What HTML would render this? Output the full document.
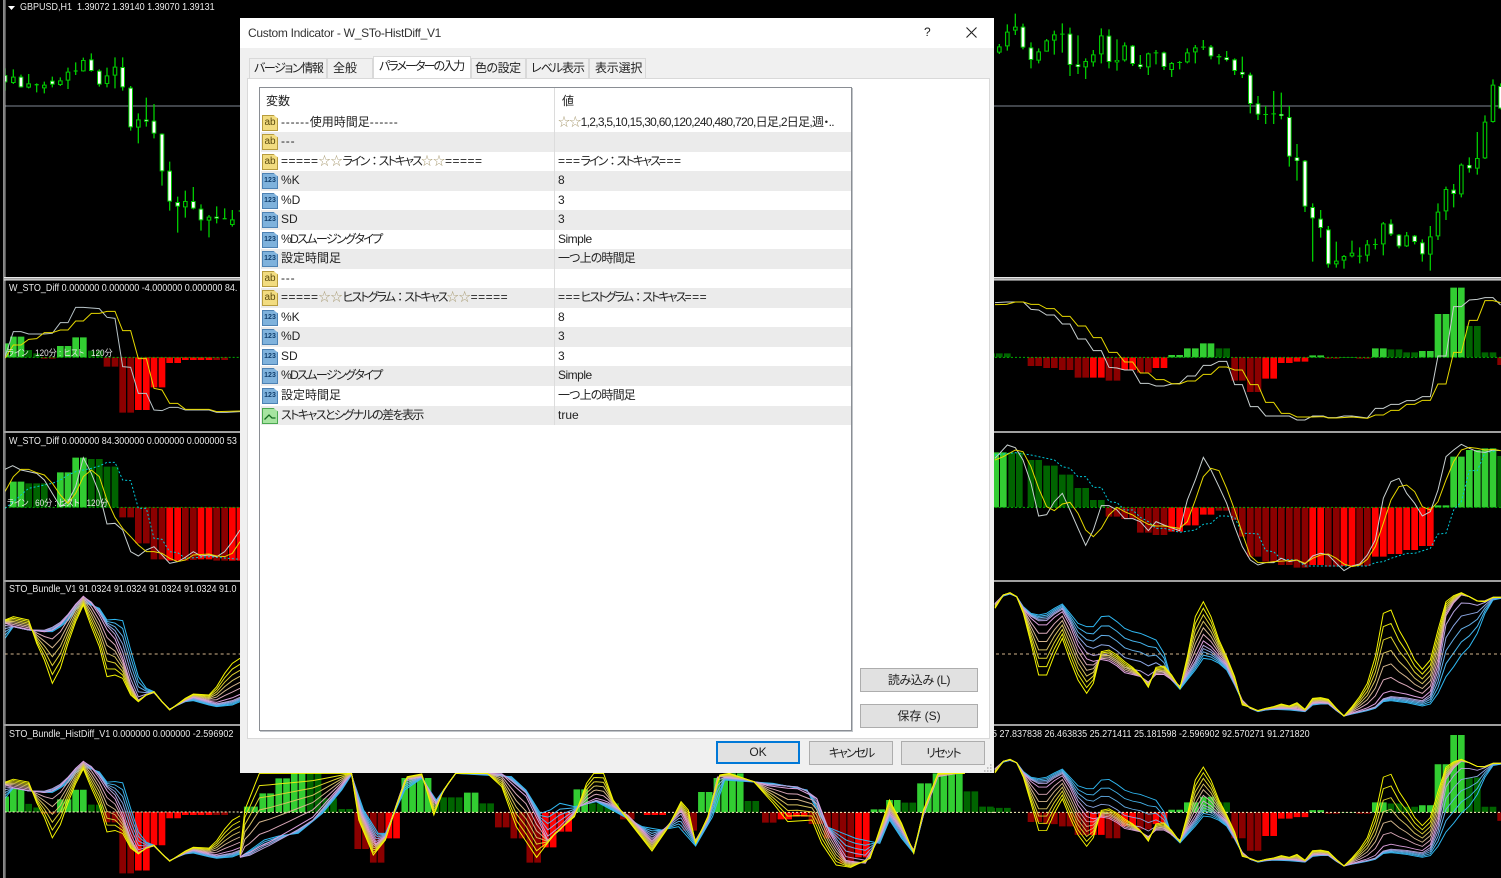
<!DOCTYPE html>
<html lang="ja"><head><meta charset="utf-8"><title>Custom Indicator</title>
<style>
html,body{margin:0;padding:0;background:#000}
body{position:relative;width:1501px;height:878px;overflow:hidden;font-family:"Liberation Sans","Noto Sans CJK JP",sans-serif}
svg.c{position:absolute;left:0;top:0}
.ns path{vector-effect:non-scaling-stroke}
path{fill:none}
.l{position:absolute;color:#e8e8e8;font-size:10px;line-height:12px;white-space:pre;transform:scaleX(.9);transform-origin:0 0;font-family:"Liberation Sans","Noto Sans CJK JP",sans-serif}
.d{position:absolute;left:240px;top:18px;width:754px;height:755px;background:#f0f0f0;font-size:12px;color:#222;font-feature-settings:"palt"}
.d div{position:absolute;white-space:pre}
.tb{left:0;top:0;width:754px;height:30px;background:#fff}
.tab{top:40px;height:20px;box-sizing:border-box;background:#f0f0f0;border:1px solid #d9d9d9;border-bottom:0;line-height:19px;text-align:left;font-size:12px}
.tab.a{top:38px;height:22px;background:#fff;z-index:2;line-height:19px}
.pg{left:7px;top:60px;width:741px;height:659px;background:#fff;border:1px solid #d9d9d9}
.lb{left:19px;top:69px;width:591px;height:642px;background:#fff;border:1px solid #8a8e94;box-shadow:1px 1px 0 #c0c4c8}
.r{left:1px;width:590px;line-height:19px}
.r.g{background:#ebebeb}
.n{left:20px;top:0}
.v{left:297px;top:0}
.i{left:1px;top:2px;width:14px;height:14px;font-size:10px;line-height:14px;text-align:center;font-family:"Liberation Sans",sans-serif;clip-path:polygon(0 0,72% 0,100% 22%,100% 100%,0 100%)}
.ab{background:#f2dc80;border:1px solid #b79c3e;color:#5c4c10}
.n1{background:#7fb2dc;border:1px solid #4d82b4;color:#123f6d;font-size:7px;font-weight:bold}
.bo{background:#a6e4a0;border:1px solid #4aa850}
.b{background:#e1e1e1;border:1px solid #adadad;text-align:center;line-height:22px;height:22px}
s{text-decoration:none;color:#a89a70}
i{font-style:normal;font-feature-settings:"palt" 0}
u{text-decoration:none;letter-spacing:.8px}
b{font-weight:normal;letter-spacing:-1.9px}
em{font-style:normal;letter-spacing:.5px}
</style></head><body>
<svg class="c" width="1501" height="878" viewBox="0 0 1501 878">
<rect width="1501" height="878" fill="#000"/>
<defs>
<g id="barsR" stroke-width="20">
<path stroke="#32cd32" d="M545 232V225M569 232V225M592 232V205M616 232V205M640 232V190M663 232V190M968 232V226M992 232V226M1062 232V231M1086 232V231M1156 232V205M1180 232V205M1297 232V213M1321 232V213M1344 232V102M1368 232V102M1391 232V23M1414 232V23"/>
<path stroke="#006400" d="M5 232V220M28 232V220M52 232V220M687 232V205M710 232V205M1203 232V208M1227 232V208M1250 232V217M1274 232V217M1438 232V138M1462 232V138M1485 232V217M1509 232V217"/>
<path stroke="#f00" d="M310 232V293M334 232V293M404 232V270M428 232V270M498 232V264M522 232V264M827 232V296M851 232V296M874 232V249M898 232V249M921 232V245M945 232V245"/>
<path stroke="#8b0000" d="M123 232V258M146 232V258M170 232V264M193 232V264M217 232V270M240 232V270M264 232V293M287 232V293M357 232V302M381 232V302M451 232V278M475 232V278M734 232V302M757 232V302M781 232V336M804 232V336M1015 232V236M1039 232V236M1109 232V236M1132 232V236M1532 232V255"/>
</g>
<g id="barsL" stroke-width="20">
<path stroke="#32cd32" d="M17 1072V1030M40 1072V1010M63 1072V1010M181 1072V1038M204 1072V1038M227 1072V1012M250 1072V1012"/>
<path stroke="#006400" d="M86 1072V1050M110 1072V1060M274 1072V1052M298 1072V1052"/>
<path stroke="#8b0000" d="M133 1072V1076M157 1072V1076M321 1072V1100M345 1072V1100M368 1072V1238M392 1072V1238M650 1072V1080M674 1072V1080"/>
<path stroke="#f00" d="M415 1072V1230M439 1072V1230M462 1072V1162M486 1072V1162M509 1072V1089M533 1072V1089M556 1072V1080M580 1072V1080M603 1072V1080M627 1072V1080"/>
</g>
<g id="bR" stroke-width="3"></g>
<g id="bL" stroke-width="3"></g>
</defs>

<g transform="scale(.33333)">
<path stroke="#7f8794" stroke-width="3" d="M14 318H3000"/>
<path stroke="#7f8794" stroke-width="3" d="M2970 318H4503"/>
<!-- left candles -->
<path stroke="#00c800" stroke-width="4" d="M15 205V272M40 208V252M63 224V263M86 222V265M110 250V277M133 245V280M157 230V262M181 232V258M204 203V267M227 187V225M250 173V215M274 160V215M298 208V260M321 203V262M345 172V265M368 172V272M392 258V392M415 340V430M439 293V380M462 312V415M486 400V557M509 485V632M533 590V698M556 572V653M580 561V628M603 613V692M627 645V712M650 619V670M674 625V657M697 630V680M716 633H724M104 254H116M221 213H233M433 361H445M668 656H680"/>
<path stroke="#00c800" stroke-width="14" d="M15 225V247M40 230V249M63 230V262M86 250V263M133 254V265M157 242V254M181 241V255M204 215V242M250 180V214M274 178V213M298 212V254M321 226V252M345 200V227M368 201V262M392 263V382M415 358V383M439 359V365M462 362V401M486 401V514M509 512V605M533 606V620M556 603V622M580 603V626M603 626V661M627 650V662M650 650V656M697 658V675"/>
<path stroke="#fff" stroke-width="8" d="M15 228V244M63 233V259M157 245V251M274 181V210M298 215V251M368 204V259M392 266V379M439 361V363M462 365V398M486 404V511M509 515V602M533 609V617M580 606V623M603 629V658M650 652V654"/>
<path stroke="#000" stroke-width="7" d="M40 233V246M86 253V260M133 257V262M181 244V252M204 218V239M250 183V211M321 229V249M345 203V224M415 361V380M556 606V619M627 653V659M697 661V672"/>
<!-- left panel 2 -->
<use href="#barsL"/>
<path stroke="#00b000" stroke-width="3" stroke-dasharray="6 6" d="M14 1072H730"/>
<path stroke="#b8c4c8" stroke-width="3" d="M15 1070L40 995 63 995 86 1002 133 1002 157 1000 181 968 204 968 227 922 250 922 298 926 321 952 345 955 368 1100 392 1102 415 1180 439 1180 462 1230 486 1232 509 1222 533 1222 556 1230 627 1230 650 1237 680 1237 720 1235"/>
<path stroke="#e6d800" stroke-width="3" d="M15 1075L40 1035 63 1035 86 1018 110 1016 133 998 157 998 181 990 204 990 227 963 250 963 274 940 298 940 321 934 345 934 368 992 392 992 415 1076 439 1076 462 1165 486 1170 509 1210 533 1210 556 1228 627 1228 650 1235 720 1233"/>
<!-- left panels 3,4,5 -->
<g transform="translate(0,1290)">
<g stroke-width="20">
<path stroke="#32cd32" d="M40 232V155M63 232V155M181 232V127M204 232V127M227 232V83M250 232V83"/>
<path stroke="#006400" d="M86 232V160M110 232V160M133 232V160M274 232V87M298 232V87M321 232V110M345 232V110"/>
<path stroke="#8b0000" d="M368 232V262M392 232V262M415 232V340M439 232V340M462 232V388M486 232V388M556 232V392M580 232V390M650 232V392M674 232V392"/>
<path stroke="#f00" d="M509 232V392M533 232V392M603 232V388M627 232V388M697 232V392M720 232V392"/>
</g>
<path stroke="#00b000" stroke-width="3" stroke-dasharray="6 6" d="M14 232H730"/>
<path stroke="#00c8d8" stroke-width="3" stroke-dasharray="6 6" d="M15 235L40 215 63 195 86 175 133 165 157 160 181 150 204 135 227 125 274 115 298 108 321 97 345 97 368 150 392 152 415 235 439 235 462 325 486 328 509 365 533 368 556 385 627 380 720 388"/>
<path stroke="#c8d0d0" stroke-width="3" d="M15 118L38 107 63 120 86 125 110 130 133 150 157 190 181 230 204 215 227 170 250 83 274 130 298 190 321 282 345 280 368 300 392 365 415 378 439 360 462 350 486 375 509 400 533 395 556 382 580 365 603 378 627 375 650 380 674 365 697 335 720 300"/>
<path stroke="#e6d800" stroke-width="3" d="M15 185L40 140 63 118 86 118 110 128 133 135 157 160 181 195 204 220 227 190 250 140 274 120 298 140 321 210 345 262 368 295 392 320 415 345 439 365 462 365 486 370 509 385 533 395 556 390 580 375 627 372 650 378 674 380 697 370 720 335"/>
<use href="#bL"/>
<path stroke="#d2b48c" stroke-width="3" stroke-dasharray="9 9" d="M14 672H730"/>
</g>
<use href="#barsL" transform="translate(0,1246.1) scale(1,1.11)"/>
<g transform="translate(0,1290)"><path stroke="#fff8c0" stroke-width="3" stroke-dasharray="6 6" d="M14 1146H730"/><use href="#bL" transform="translate(0,555.5) scale(1,.879)"/></g>

<!-- right candles -->
<g transform="translate(2970,0)">
<path stroke="#00c800" stroke-width="4" d="M28 132V162M52 73V152M76 41V105M99 71V148M123 127V205M146 145V190M170 117V155M193 92V164M217 70V158M240 83V228M264 106V222M287 175V237M310 150V200M334 85V190M357 88V205M381 118V212M404 127V185M428 135V198M451 165V207M475 158V225M498 150V193M522 155V210M545 186V231M569 183V208M592 145V190M616 135V190M640 120V150M663 135V178M687 162V193M710 153V184M734 175V225M757 170V234M781 218V340M804 288V360M827 318V372M851 273V372M874 278V358M898 318V500M921 432V542M945 480V636M968 610V785M992 630V713M1015 678V803M1039 725V803M1062 765V806M1086 722V772M1109 742V790M1132 720V785M1156 716V748M1180 666V766M1203 658V708M1227 702V745M1250 696V741M1274 705V733M1297 718V785M1321 678V812M1344 610V720M1368 560V660M1391 552V622M1414 490V592M1438 472V518M1462 396V524M1485 346V477M1509 238V368M1532 250V328"/>
<path stroke="#00c800" stroke-width="14" d="M28 139V158M52 95V139M76 80V92M99 80V143M123 142V180M146 154V182M170 121V155M193 103V122M217 101V104M240 101V195M264 193V201M287 183V202M310 163V187M334 106V163M357 107V186M381 180V187M404 136V181M428 137V192M451 193V201M475 160V202M498 157V160M522 157V201M545 189V210M569 186V189M592 157V187M616 142V157M640 140V143M663 140V169M687 168V172M710 172V180M734 178V213M757 216V224M781 224V312M804 310V344M827 342V345M851 340V343M874 342V348M898 351V470M921 472V483M945 482V620M968 621V655M992 656V684M1015 688V793M1039 782V793M1062 768V782M1086 758V769M1109 767V770M1132 733V767M1156 732V735M1180 670V733M1203 671V703M1227 704V739M1250 706V739M1274 707V726M1297 727V763M1321 709V764M1344 635V709M1368 567V634M1391 569V582M1414 494V583M1438 495V505M1462 474V506M1485 365V475M1509 254V366M1532 258V326"/>
<path stroke="#fff" stroke-width="8" d="M99 83V140M123 145V177M240 104V192M264 195V199M357 110V183M428 140V189M451 195V199M522 160V198M663 143V166M710 174V178M734 181V210M757 218V222M781 227V309M804 313V341M874 344V346M898 354V467M921 474V481M945 485V617M968 624V652M992 659V681M1015 691V790M1203 674V700M1227 707V736M1274 710V723M1297 730V760M1391 572V579M1438 497V503M1532 261V323"/>
<path stroke="#000" stroke-width="7" d="M28 142V155M52 98V136M76 83V89M146 157V179M170 124V152M193 106V119M287 186V199M310 166V184M334 109V160M381 182V185M404 139V178M475 163V199M545 192V207M592 160V184M616 145V154M1039 785V790M1062 771V779M1086 761V766M1132 736V764M1180 673V730M1250 709V736M1321 712V761M1344 638V706M1368 570V631M1414 497V580M1462 477V503M1485 368V472M1509 257V363"/>
</g>

<!-- right panels 2,3 -->
<g transform="translate(2970,840)">
<use href="#barsR"/>
<path stroke="#00b000" stroke-width="3" stroke-dasharray="6 6" d="M15 232H1533"/>
<path stroke="#c8d0d0" stroke-width="3" d="M15 68L50 66 100 66 123 88 146 90 170 105 193 105 217 132 240 132 264 177 287 177 310 212 334 212 357 262 381 264 404 270 428 270 451 310 475 310 498 318 522 318 545 312 569 310 592 288 616 288 640 256 663 256 687 244 710 244 734 314 757 314 781 380 804 380 827 408 851 408 898 408 921 420 945 420 968 408 1000 408 1015 413 1039 413 1062 408 1086 408 1132 414 1156 385 1180 385 1203 373 1227 373 1250 362 1274 362 1297 350 1321 350 1344 228 1368 228 1391 80 1414 80 1438 60 1462 58 1485 53 1509 53 1532 75"/>
<path stroke="#e6d800" stroke-width="3" d="M15 74L50 73 76 66 100 66 123 73 146 73 170 86 193 86 217 109 240 109 264 138 287 138 310 173 334 173 357 217 381 217 404 246 428 246 451 279 475 279 498 299 522 299 545 311 569 312 592 303 616 303 640 283 663 283 687 261 710 261 734 270 757 270 781 314 804 314 827 367 851 367 874 400 898 400 921 411 968 411 1000 410 1015 414 1039 414 1086 411 1132 415 1156 405 1180 405 1203 391 1227 391 1250 373 1274 373 1297 361 1321 361 1344 312 1368 312 1391 217 1414 217 1438 121 1462 121 1485 62 1509 62 1532 68"/>
<g stroke-width="20">
<path stroke="#32cd32" d="M17 682V517M40 682V517M1391 682V530M1414 682V530M1438 682V510M1462 682V510M1485 682V505M1509 682V505M1344 682V676M1368 682V676"/>
<path stroke="#006400" d="M65 682V517M88 682V517M123 682V540M146 682V540M170 682V557M193 682V557M217 682V584M240 682V584M264 682V624M287 682V624M310 682V660M334 682V660M1532 682V528"/>
<path stroke="#8b0000" d="M357 682V710M381 682V710M404 682V717M428 682V717M451 682V758M475 682V758M498 682V765M522 682V765M687 682V692M710 682V692M734 682V720M757 682V770M781 682V830M804 682V830M827 682V845M851 682V845M874 682V855M898 682V855M921 682V863M945 682V863M1015 682V860M1039 682V860M1109 682V858M1132 682V858"/>
<path stroke="#f00" d="M545 682V755M569 682V755M592 682V736M616 682V736M640 682V704M663 682V704M968 682V855M992 682V855M1062 682V858M1086 682V858M1156 682V830M1180 682V830M1203 682V822M1227 682V822M1250 682V810M1274 682V810M1297 682V798M1321 682V798"/>
</g>
<path stroke="#00b000" stroke-width="3" stroke-dasharray="6 6" d="M15 682H1533"/>
<path stroke="#00c8d8" stroke-width="3" stroke-dasharray="6 6" d="M15 525L76 518 123 525 170 535 193 540 217 560 240 565 264 590 287 590 310 622 334 622 357 665 381 668 404 690 428 690 451 712 475 725 498 745 522 745 569 757 616 750 640 733 663 730 687 708 710 708 734 712 757 760 781 760 804 762 827 812 851 815 874 838 921 840 945 858 1132 858 1156 848 1180 845 1203 835 1250 820 1274 820 1321 805 1344 762 1368 760 1391 690 1414 665 1438 572 1462 572 1485 518 1532 510"/>
<path stroke="#c8d0d0" stroke-width="3" d="M15 535L52 495 76 503 99 540 123 610 146 708 170 704 193 665 217 640 240 690 264 745 287 796 310 750 334 677 357 677 381 690 404 716 428 716 451 725 475 752 498 725 522 735 569 752 592 660 616 600 640 532 663 570 687 620 710 670 734 740 757 800 781 840 804 855 827 848 851 848 874 835 898 845 921 840 945 852 968 828 992 820 1015 825 1039 850 1062 872 1086 858 1109 852 1132 825 1156 780 1180 655 1203 605 1227 595 1250 640 1274 670 1297 708 1321 695 1344 630 1368 530 1391 510 1414 493 1438 505 1462 515 1485 517 1509 510 1532 512"/>
<path stroke="#e6d800" stroke-width="3" d="M15 540L40 530 76 510 99 515 123 560 146 625 170 680 193 692 217 672 240 667 264 700 287 750 310 770 334 745 357 705 381 682 404 695 428 705 451 720 475 733 498 738 522 738 569 745 592 725 616 660 640 590 663 565 687 572 710 625 734 690 757 760 781 828 804 848 827 848 851 845 898 842 921 840 945 850 968 835 992 825 1015 822 1039 835 1062 852 1086 860 1109 855 1132 838 1156 800 1180 730 1203 660 1227 620 1250 615 1274 635 1297 680 1321 690 1344 665 1368 600 1391 545 1414 510 1438 502 1462 505 1485 510 1509 508 1532 512"/>
</g>

<!-- right panels 4,5 -->
<g transform="translate(2970,1740)">
<use href="#bR"/>
<path stroke="#d2b48c" stroke-width="3" stroke-dasharray="9 9" d="M0 222H1533"/>
<use href="#barsR" transform="translate(0,439.5) scale(1,1.11)"/>
<path stroke="#fff8c0" stroke-width="3" stroke-dasharray="6 6" d="M0 697H1533"/>
<use href="#bR" transform="translate(0,505) scale(1,.865)"/>
</g>
</g>

<!-- middle bottom -->
<g class="ns" transform="translate(240,770) scale(.4847,.33333)">
<g stroke-width="6.7">
<path stroke="#32cd32" d="M15 127V110M30 127V110M47 127V70M63 127V70M80 127V25M96 127V25M112 127V10M128 127V10M340 127V24M356 127V24M372 127V24M388 127V24M469 127V68M485 127V68M695 127V58M711 127V58M952 127V66M968 127V66M984 127V24M1000 127V24M1016 127V10M1032 127V10M1308 127V118M1324 127V118M1340 127V90M1356 127V90M1404 127V40M1420 127V40M1436 127V10M1452 127V10M1468 127V10M1484 127V10"/>
<path stroke="#006400" d="M145 127V10M161 127V10M177 127V85M193 127V85M210 127V117M226 127V117M404 127V100M420 127V82M436 127V82M452 127V82M501 127V100M517 127V100M727 127V100M743 127V100M759 127V100M775 127V100M1048 127V93M1064 127V93M1372 127V98M1388 127V98M1500 127V64M1516 127V64M1532 127V110M1548 127V110"/>
<path stroke="#f00" d="M307 127V205M323 127V205M630 127V232M646 127V232M662 127V185M678 127V185M840 127V135M856 127V135M872 127V135M1116 127V148M1132 127V148M1148 127V140M1164 127V140M1276 127V262M1292 127V262"/>
<path stroke="#8b0000" d="M243 127V237M259 127V237M275 127V278M291 127V278M533 127V172M549 127V172M565 127V205M582 127V205M598 127V278M614 127V278M791 127V148M807 127V148M920 127V182M936 127V182M1084 127V158M1100 127V158M1180 127V162M1196 127V162M1212 127V205M1228 127V205M1244 127V280M1260 127V280"/>
</g>
<path stroke="#fff8c0" stroke-width="1" stroke-dasharray="2 2" d="M0 127H1560"/>
<g id="bM" stroke-width="1"></g>
</g>

<rect x="0" y="0" width="4.6" height="878" fill="#000"/>
<rect x="3" y="0" width="1" height="878" fill="#8c8c8c"/>
<rect x="4.4" y="0" width="1" height="878" fill="#d0d0d0"/>
<g fill="#a0a0a0">
<rect x="4" y="277" width="1497" height="3"/><rect x="4" y="431" width="1497" height="2"/><rect x="4" y="580" width="1497" height="2"/><rect x="4" y="724" width="1497" height="2"/>
</g>
<g fill="#e8e8e8"><rect x="4" y="277" width="1497" height="1"/><rect x="4" y="279.5" width="1497" height="1"/></g>
<path fill="#fff" style="fill:#fff" d="M8 6H15L11.500 10Z"/>
</svg>
<script>
(function(){
var NS="http://www.w3.org/2000/svg";
var cols=["#2fb8f2","#45b4ec","#62aee6","#8ba6e2","#b4a2dc","#dda0dd","#d9a8b8","#d2b48c","#d4c060","#dcd030","#e8e810","#f6f600"];
function parse(s){var n=s.trim().split(/[ ,]+/).map(Number),p=[];for(var i=0;i<n.length;i+=2)p.push([n[i],n[i+1]]);return p}
function at(p,x){if(x<=p[0][0])return p[0][1];for(var i=1;i<p.length;i++){if(x<=p[i][0]){var a=p[i-1],b=p[i];return a[1]+(b[1]-a[1])*(x-a[0])/(b[0]-a[0])}}return p[p.length-1][1]}
function build(id,fs,ms,ss){
var F=parse(fs),M=parse(ms),S=parse(ss),seen={},xs=[];
[F,M,S].forEach(function(c){c.forEach(function(q){if(!seen[q[0]]){seen[q[0]]=1;xs.push(q[0])}})});
xs.sort(function(a,b){return a-b});
var g=document.getElementById(id),N=cols.length;
for(var k=0;k<N;k++){
var t=k/(N-1),d="";
for(var j=0;j<xs.length;j++){
var x=xs[j],y;
if(t<.42){var u=t/.42;y=at(S,x)*(1-u)+at(M,x)*u}else{var v=(t-.42)/.58;y=at(M,x)*(1-v)+at(F,x)*v}
d+=(j?"L":"M")+x+" "+y.toFixed(1);
}
var e=document.createElementNS(NS,"path");e.setAttribute("d",d);e.setAttribute("stroke",cols[k]);
g.appendChild(e);
}
}
build("bR",
"15 85 40 45 60 38 80 50 100 100 123 190 146 285 170 285 193 225 217 175 240 240 264 300 290 340 310 310 334 215 357 210 381 225 404 245 428 262 451 285 475 322 498 262 522 258 545 285 570 325 592 230 616 110 640 65 663 110 687 180 710 230 734 290 757 375 781 382 804 392 827 385 851 380 874 372 898 378 921 368 945 388 968 355 992 353 1015 358 1039 385 1062 408 1086 380 1109 350 1132 310 1156 230 1180 100 1203 90 1227 150 1250 190 1274 240 1297 268 1321 240 1344 150 1368 65 1391 47 1414 38 1438 50 1462 63 1485 65 1509 52 1533 52",
"15 70 40 45 60 40 80 50 100 85 123 110 146 125 170 125 193 105 217 90 240 130 264 190 290 230 310 240 334 240 357 245 381 260 404 280 428 285 451 290 475 305 498 285 522 285 545 300 570 318 592 280 616 240 640 190 663 205 687 230 710 255 734 310 757 360 781 385 804 392 827 388 851 385 898 385 945 392 968 370 992 368 1015 370 1039 390 1062 408 1086 400 1132 388 1156 380 1180 355 1203 348 1250 352 1297 360 1321 340 1344 260 1368 110 1391 70 1414 45 1438 50 1462 63 1485 62 1509 52 1533 52",
"15 75 40 48 60 42 80 50 100 80 123 100 146 105 170 100 193 85 217 72 240 100 264 130 290 140 310 140 334 110 357 108 381 125 404 145 428 155 451 160 475 170 498 180 522 220 545 300 570 328 592 300 616 270 640 235 663 238 687 250 710 270 734 315 757 365 781 385 804 395 827 390 851 388 898 390 945 395 968 375 992 372 1015 372 1039 392 1062 408 1086 402 1132 392 1156 385 1180 365 1203 362 1250 368 1297 378 1321 372 1344 340 1368 290 1391 260 1414 225 1438 200 1462 160 1485 100 1509 60 1533 55");
build("bL",
"15 570 40 560 63 565 86 570 110 640 133 690 157 760 181 715 204 640 227 575 250 525 274 590 298 650 321 740 345 735 368 745 392 795 415 815 439 795 462 785 486 815 509 840 533 822 556 805 580 792 627 795 650 770 674 730 697 700 720 685",
"15 580 40 590 63 595 86 600 133 600 157 590 181 575 204 550 227 520 250 497 274 515 298 550 321 590 345 620 368 680 392 760 415 810 439 795 462 788 486 815 509 838 533 825 556 812 580 802 627 815 650 820 674 815 697 810 720 800",
"15 625 40 590 63 595 86 600 133 605 157 605 181 590 204 572 227 540 250 518 274 525 298 535 321 570 345 568 368 572 392 660 415 740 439 775 462 785 486 815 509 838 533 825 556 815 580 812 627 825 650 830 697 825 720 815");
build("bM",
"0 250 10 120 40 10 230 10 245 150 275 255 300 210 320 120 345 20 375 12 400 135 420 60 445 10 510 10 540 50 570 170 612 262 650 190 690 140 715 40 730 10 750 10 770 90 800 150 850 243 880 180 910 95 925 120 940 220 965 140 990 15 1010 10 1060 35 1100 100 1130 155 1180 150 1200 220 1230 285 1260 292 1300 265 1340 90 1365 160 1390 250 1410 120 1440 10 1495 10",
"0 262 20 258 60 230 100 195 150 150 190 80 230 10 250 130 280 220 300 200 340 30 375 20 405 100 430 40 445 10 540 10 590 70 620 160 635 210 660 180 700 110 735 90 760 100 800 135 850 210 880 170 910 125 940 210 965 150 985 20 1040 28 1090 45 1150 50 1190 80 1215 180 1250 270 1290 280 1320 200 1340 130 1365 180 1390 240 1410 135 1440 20 1480 10",
"0 262 50 210 80 198 120 190 170 130 210 60 230 15 255 120 285 190 300 190 340 60 375 25 405 90 430 40 445 10 560 20 590 60 620 130 640 120 660 100 690 110 735 95 780 130 830 170 870 180 905 170 940 228 975 140 1000 30 1100 40 1170 60 1190 120 1210 170 1270 205 1320 220 1340 150 1365 205 1390 250 1410 135 1440 15 1480 10");
})();
</script>

<div class="l" style="left:20px;top:1.500px">GBPUSD,H1  1.39072 1.39140 1.39070 1.39131</div>
<div class="l" style="left:9px;top:283px">W_STO_Diff 0.000000 0.000000 -4.000000 0.000000 84.</div>
<div class="l" style="left:9px;top:436px">W_STO_Diff 0.000000 84.300000 0.000000 0.000000 53</div>
<div class="l" style="left:9px;top:584px">STO_Bundle_V1 91.0324 91.0324 91.0324 91.0324 91.0</div>
<div class="l" style="left:9px;top:729px">STO_Bundle_HistDiff_V1 0.000000 0.000000 -2.596902</div>
<div class="l" style="left:991.500px;top:729px">5 27.837838 26.463835 25.271411 25.181598 -2.596902 92.570271 91.271820</div>
<div class="l" style="left:7px;top:347px;font-size:9px;font-feature-settings:'palt'">ライン   120分 : ヒスト   120分</div>
<div class="l" style="left:7px;top:497px;font-size:9px;font-feature-settings:'palt'">ライン   60分 : ヒスト   120分</div>

<div class="d">
<div class="tb"></div>
<div style="left:8px;top:8px;font-size:12px;color:#333;letter-spacing:-.3px;font-feature-settings:normal">Custom Indicator - W_STo-HistDiff_V1</div>
<div style="left:684px;top:7px;font-size:12px;color:#222">?</div>
<svg style="position:absolute;left:726px;top:9px" width="11" height="11" viewBox="0 0 11 11"><path stroke="#222" stroke-width="1.100" d="M.5 .5L10.500 10.500M10.500 .5L.5 10.500"/></svg>
<div class="pg"></div>
<div class="tab" style="left:9px;width:78px;padding-left:4px;letter-spacing:-1.400px">バージョン情報</div>
<div class="tab" style="left:87px;width:46px;padding-left:5px">全般</div>
<div class="tab a" style="left:133px;width:98px;padding-left:5px;letter-spacing:-1.900px">パラメーターの入力</div>
<div class="tab" style="left:231px;width:55px;padding-left:3px;letter-spacing:-.5px">色の設定</div>
<div class="tab" style="left:286px;width:63px;padding-left:4px;letter-spacing:-1px">レベル表示</div>
<div class="tab" style="left:349px;width:57px;padding-left:5px;letter-spacing:-.2px">表示選択</div>
<div class="lb">
<div style="left:6px;top:4px">変数</div>
<div style="left:302px;top:4px">値</div>
<div class="r" style="top:25px;height:19px"><div class="i ab">ab</div><div class="n"><u>------</u>使用時間足<u>------</u></div><div class="v" style="letter-spacing:-.7px"><s>☆☆</s>1,2,3,5,10,15,30,60,120,240,480,720,日足,2日足,週・..</div></div>
<div class="r g" style="top:44px;height:20px"><div class="i ab">ab</div><div class="n"><u>---</u></div></div>
<div class="r" style="top:64px;height:19px"><div class="i ab">ab</div><div class="n"><em>=====</em><s>☆☆</s><b>ライン<i>：</i>ストキャス</b><s>☆☆</s><em>=====</em></div><div class="v"><em>===</em><b>ライン<i>：</i>ストキャス</b><em>===</em></div></div>
<div class="r g" style="top:83px;height:20px"><div class="i n1">123</div><div class="n">%K</div><div class="v">8</div></div>
<div class="r" style="top:103px;height:19px"><div class="i n1">123</div><div class="n">%D</div><div class="v">3</div></div>
<div class="r g" style="top:122px;height:20px"><div class="i n1">123</div><div class="n">SD</div><div class="v">3</div></div>
<div class="r" style="top:142px;height:19px"><div class="i n1">123</div><div class="n" style="letter-spacing:-1.600px">%Dスムージングタイプ</div><div class="v" style="letter-spacing:-.5px">Simple</div></div>
<div class="r g" style="top:161px;height:20px"><div class="i n1">123</div><div class="n">設定時間足</div><div class="v" style="letter-spacing:-.85px">一つ上の時間足</div></div>
<div class="r" style="top:181px;height:19px"><div class="i ab">ab</div><div class="n"><u>---</u></div></div>
<div class="r g" style="top:200px;height:20px"><div class="i ab">ab</div><div class="n"><em>=====</em><s>☆☆</s><b>ヒストグラム<i>：</i>ストキャス</b><s>☆☆</s><em>=====</em></div><div class="v"><em>===</em><b>ヒストグラム<i>：</i>ストキャス</b><em>===</em></div></div>
<div class="r" style="top:220px;height:19px"><div class="i n1">123</div><div class="n">%K</div><div class="v">8</div></div>
<div class="r g" style="top:239px;height:20px"><div class="i n1">123</div><div class="n">%D</div><div class="v">3</div></div>
<div class="r" style="top:259px;height:19px"><div class="i n1">123</div><div class="n">SD</div><div class="v">3</div></div>
<div class="r g" style="top:278px;height:20px"><div class="i n1">123</div><div class="n" style="letter-spacing:-1.600px">%Dスムージングタイプ</div><div class="v" style="letter-spacing:-.5px">Simple</div></div>
<div class="r" style="top:298px;height:20px"><div class="i n1">123</div><div class="n">設定時間足</div><div class="v" style="letter-spacing:-.85px">一つ上の時間足</div></div>
<div class="r g" style="top:318px;height:19px"><div class="i bo"><svg style="position:absolute;left:0;top:0" width="14" height="14" viewBox="0 0 14 14"><path stroke="#156a20" stroke-width="1.300" d="M1.500 10.500L6 6 9 9H12.500"/></svg></div><div class="n" style="letter-spacing:-1.600px">ストキャスとシグナルの差を表示</div><div class="v">true</div></div>
<div style="left:294px;top:0;width:1px;height:337px;background:#dcdcdc"></div>
</div>
<div class="b" style="left:620px;top:650px;width:116px;letter-spacing:-.4px">読み込み (L)</div>
<div class="b" style="left:620px;top:686px;width:116px">保存 (S)</div>
<div class="b" style="left:476px;top:723px;width:80px;height:19px;line-height:19px;border:2px solid #0078d7">OK</div>
<div class="b" style="left:569px;top:723px;width:82px;letter-spacing:-2px">キャンセル</div>
<div class="b" style="left:661px;top:723px;width:82px;letter-spacing:-1.500px">リセット</div>
<svg style="position:absolute;left:744px;top:745px" width="9" height="9" viewBox="0 0 9 9"><path stroke="#b0b0b0" stroke-width="1.500" stroke-dasharray="1.500 1.500" d="M0 8H9M3 5H9M6 2H9"/></svg>
</div>
</body></html>
